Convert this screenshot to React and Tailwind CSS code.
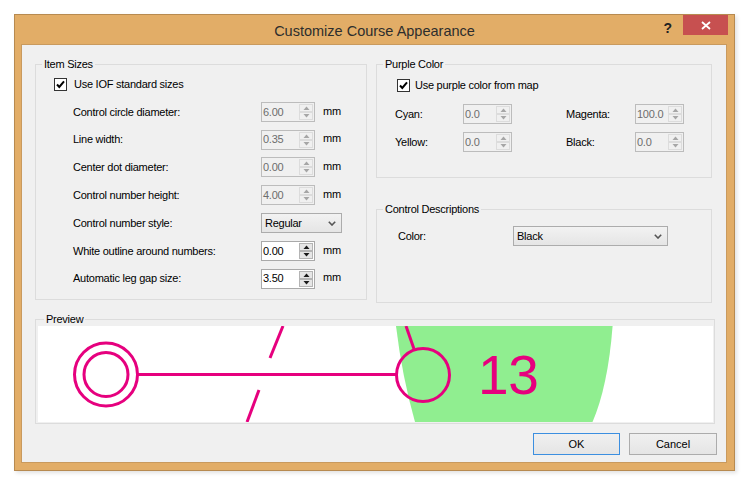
import React from "react";

const ITEM_ROWS = [
  { label: "Control circle diameter:", value: "6.00", disabled: true },
  { label: "Line width:", value: "0.35", disabled: true },
  { label: "Center dot diameter:", value: "0.00", disabled: true },
  { label: "Control number height:", value: "4.00", disabled: true },
  { label: "Control number style:", combo: "Regular" },
  { label: "White outline around numbers:", value: "0.00" },
  { label: "Automatic leg gap size:", value: "3.50" },
];

const Arrow = ({ up, color }) => (
  <svg width="7" height="4" viewBox="0 0 7 4">
    <path d={up ? "M0.5 4 L3.5 0.5 L6.5 4Z" : "M0.5 0 L3.5 3.5 L6.5 0Z"} fill={color} />
  </svg>
);

const Spinner = ({ value, disabled, wide }) => (
  <div
    className={`${wide ? "w-[54px]" : "w-[49px]"} h-[20px] flex border ${
      disabled
        ? "border-[#bcbcbc] bg-[#f0f0f0] text-[#6d6d6d]"
        : "border-[#a9a9a9] bg-white text-black"
    }`}
  >
    <div className="flex-1 pl-[1px] flex items-center">{value}</div>
    <div className="w-[16px] flex flex-col p-[1px]">
      {[true, false].map((up) => (
        <div
          key={up ? "u" : "d"}
          className={`flex-1 flex items-center justify-center border ${
            disabled
              ? "border-[#dcdcdc] bg-[#f0f0f0]"
              : "border-[#b4b4b4] bg-[#e6e6e6]"
          }`}
        >
          <Arrow up={up} color={disabled ? "#a6a6a6" : "#1a1a1a"} />
        </div>
      ))}
    </div>
  </div>
);

const Combo = ({ value, width }) => (
  <div
    className={`${width} h-[20px] flex items-center justify-between pl-[3px] pr-[5px] border border-[#acacac] bg-linear-to-b from-[#f2f2f2] to-[#e5e5e5]`}
  >
    <span>{value}</span>
    <svg width="8" height="5" viewBox="0 0 8 5">
      <path d="M0.8 0.8 L4 4 L7.2 0.8" fill="none" stroke="#555" strokeWidth="1.6" />
    </svg>
  </div>
);

const CheckBox = () => (
  <div className="w-[13px] h-[13px] border border-[#333] bg-white flex items-center justify-center">
    <svg width="11" height="11" viewBox="0 0 11 11">
      <path d="M2 5.5 L4.3 8 L9 2.3" fill="none" stroke="#000" strokeWidth="2" />
    </svg>
  </div>
);

const Group = ({ title, className, children }) => (
  <fieldset className={`border border-[#dcdcdc] ${className}`}>
    <legend className="ml-[6px] px-[2px] leading-[13px]">{title}</legend>
    {children}
  </fieldset>
);

const Preview = () => (
  <svg width="675" height="96" viewBox="0 0 675 96" className="block">
    <path
      d="M358 0 L574.6 0 Q570 60 554.5 96 L377 96 Q364 50 358 0 Z"
      fill="#90ee90"
    />
    <g stroke="#e6007e" strokeWidth="3" fill="none">
      <circle cx="68" cy="48.5" r="31.5" />
      <circle cx="68" cy="48.5" r="22" />
      <line x1="99.5" y1="48.5" x2="358.5" y2="48.5" />
      <circle cx="385" cy="49" r="26.5" />
      <line x1="368" y1="0" x2="376" y2="23" />
      <line x1="245" y1="0" x2="232" y2="32" />
      <line x1="221" y1="64" x2="209" y2="96" />
    </g>
    <text
      x="440"
      y="68"
      fill="#e6007e"
      fontSize="55"
      fontFamily="Liberation Sans, Arial, sans-serif"
    >
      13
    </text>
  </svg>
);

export default function App() {
  return (
    <div className="w-[753px] h-[490px] bg-white pl-[14px] pt-[14px] font-['Liberation_Sans',Arial,sans-serif] text-[11px] tracking-[-0.25px] text-black">
      <div className="w-[721px] h-[457px] border border-[#b78a50] bg-[#e2ad67] shadow-[2px_2px_4px_rgba(0,0,0,0.12)] flex flex-col">
        {/* Title bar */}
        <div className="h-[29px] grid grid-cols-[1fr_auto_1fr]">
          <div />
          <div className="text-[14.5px] tracking-normal text-[#2d2d2d] pt-[6px]">
            Customize Course Appearance
          </div>
          <div className="flex justify-end items-start pr-[6px]">
            <span className="mt-[3px] mr-[11px] text-[14px] font-bold tracking-normal text-[#222]">
              ?
            </span>
            <div className="w-[45px] h-[20px] bg-[#c75050] flex items-center justify-center">
              <svg width="10" height="9" viewBox="0 0 10 9">
                <path d="M1 1 L9 8 M9 1 L1 8" stroke="#fff" strokeWidth="1.8" />
              </svg>
            </div>
          </div>
        </div>

        {/* Client area */}
        <div className="ml-[6px] w-[706px] h-[419px] border border-[#c99a5e] bg-[#f0f0f0] pl-[13px] pt-[13px] flex flex-col">
          <div className="flex gap-[9px]">
            <Group title="Item Sizes" className="w-[332px] h-[242px]">
              <div className="h-[27px] flex items-center pl-[18px] gap-[7px]">
                <CheckBox />
                <span>Use IOF standard sizes</span>
              </div>
              {ITEM_ROWS.map((row) => (
                <div key={row.label} className="h-[27.8px] flex items-center pl-[37px]">
                  <span className="w-[188px]">{row.label}</span>
                  {row.combo ? (
                    <Combo value={row.combo} width="w-[81px]" />
                  ) : (
                    <>
                      <Spinner value={row.value} disabled={row.disabled} wide />
                      <span className="ml-[8px] -mt-[2px]">mm</span>
                    </>
                  )}
                </div>
              ))}
            </Group>

            <div className="flex flex-col">
              <Group title="Purple Color" className="w-[336px] h-[120px]">
                <div className="h-[29px] flex items-center pl-[20px] gap-[5px]">
                  <CheckBox />
                  <span>Use purple color from map</span>
                </div>
                {[
                  ["Cyan:", "0.0", "Magenta:", "100.0"],
                  ["Yellow:", "0.0", "Black:", "0.0"],
                ].map(([l1, v1, l2, v2]) => (
                  <div key={l1} className="h-[28px] flex items-center pl-[18px]">
                    <span className="w-[68px]">{l1}</span>
                    <Spinner value={v1} disabled />
                    <span className="ml-[54px] w-[69px]">{l2}</span>
                    <Spinner value={v2} disabled />
                  </div>
                ))}
              </Group>

              <Group title="Control Descriptions" className="mt-[25px] w-[336px] h-[100px]">
                <div className="mt-[10px] h-[20px] flex items-center pl-[21px]">
                  <span className="w-[115px]">Color:</span>
                  <Combo value="Black" width="w-[155px]" />
                </div>
              </Group>
            </div>
          </div>

          <Group title="Preview" className="mt-[10px] w-[680px] pl-[2px] pr-[1px] pb-[1px]">
            <div className="bg-white h-[96px] overflow-hidden">
              <Preview />
            </div>
          </Group>

          <div className="mt-[9px] flex justify-end gap-[9px] pr-[9px]">
            <button className="w-[87px] h-[22px] border border-[#3c8fe0] bg-linear-to-b from-[#f0f0f0] to-[#e5e5e5] tracking-normal">
              OK
            </button>
            <button className="w-[88px] h-[22px] border border-[#acacac] bg-linear-to-b from-[#f0f0f0] to-[#e5e5e5] tracking-normal">
              Cancel
            </button>
          </div>
        </div>
      </div>
    </div>
  );
}
